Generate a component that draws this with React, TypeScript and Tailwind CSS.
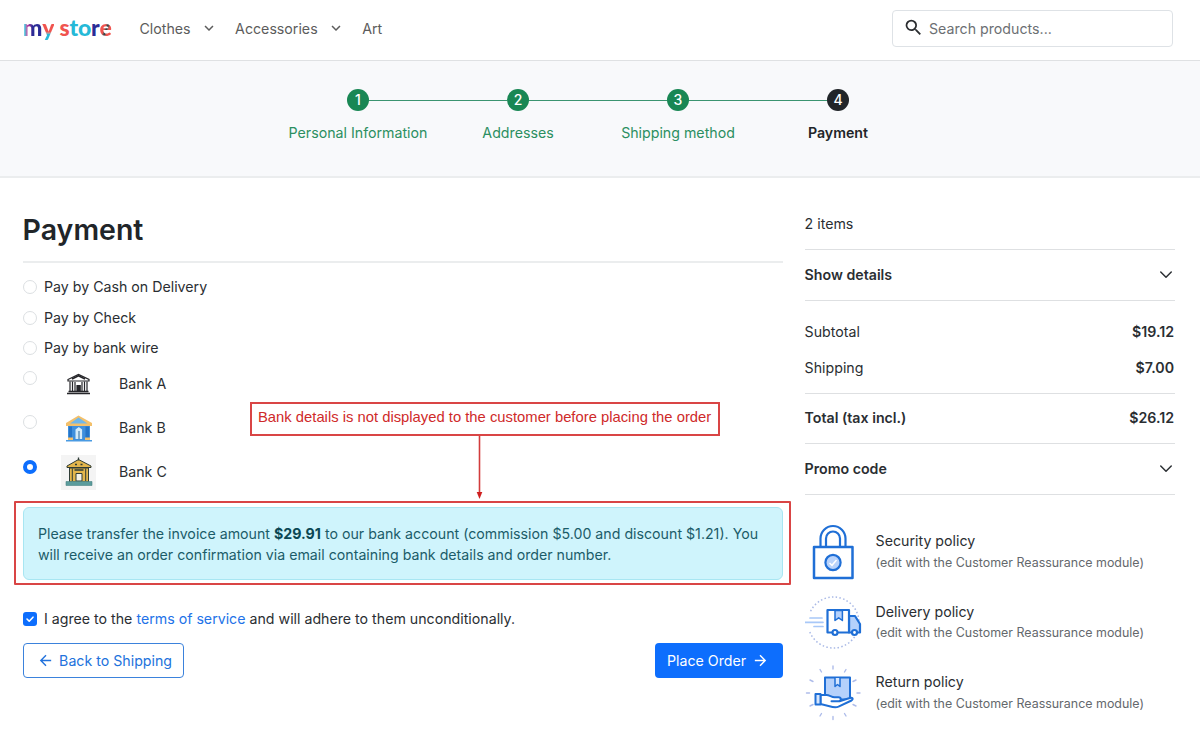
import React, { useState } from 'react';
import { MdArrowBack, MdArrowForward, MdExpandMore, MdSearch } from 'react-icons/md';

interface Step {
  label: string;
  current?: boolean;
}

const steps: Step[] = [
  { label: 'Personal Information' },
  { label: 'Addresses' },
  { label: 'Shipping method' },
  { label: 'Payment', current: true },
];

const methods = ['Pay by Cash on Delivery', 'Pay by Check', 'Pay by bank wire'];

const Logo: React.FC = () => (
  <div className="w-[89px] h-[30px] mb-[4px] flex items-center font-['Lato',sans-serif] font-black text-[23px] leading-[30px] tracking-[-0.2px] whitespace-pre">
    <span className="bg-linear-to-r from-[#24b9d7] from-10% via-[#c0289b] via-25% to-[#2b2b96] to-50% bg-clip-text text-transparent">m</span>
    <span className="bg-linear-to-b from-[#f0544f] from-65% to-[#25b9d7] to-75% bg-clip-text text-transparent">y</span>
    <span className="text-[#f0544f]"> s</span>
    <span className="text-[#25b9d7]">t</span>
    <span className="text-[#25b9d7]">o</span>
    <span className="text-[#2b2b96]">r</span>
    <span className="bg-linear-to-br from-[#f0544f] from-45% via-[#173b46] via-55% to-[#f0544f] to-65% bg-clip-text text-transparent">e</span>
  </div>
);

const Header: React.FC = () => (
  <header className="h-[61px] border-b border-[#dfe1e3] flex items-center justify-between pl-[23px] pr-[27px] pb-[3px]">
    <div className="flex items-center text-[#5c5c5c]">
      <Logo />
      <nav className="flex items-center ml-[27.5px]">
        <a className="flex items-center">
          Clothes <MdExpandMore size={18} className="ml-[9.5px] mb-[2px]" />
        </a>
        <a className="flex items-center ml-[17px]">
          Accessories <MdExpandMore size={18} className="ml-[9.5px] mb-[2px]" />
        </a>
        <a className="ml-[17px]">Art</a>
      </nav>
    </div>
    <div className="w-[281px] h-[37px] border border-[#dee2e6] rounded-[4px] flex items-center pl-[10px] text-[#6c6f73]">
      <MdSearch size={21} className="text-[#2b2d30] mr-[5px] mb-[2px]" />
      Search products...
    </div>
  </header>
);

const Steps: React.FC = () => (
  <section className="h-[117px] bg-[#f8f9fb] border-b-2 border-[#ebedee] flex justify-center pt-[28px] pr-[4px]">
    {steps.map((step, i) => (
      <div key={step.label} className="w-[160px] flex flex-col items-center">
        <div className="w-full flex items-center">
          <div className={i > 0 ? 'flex-1 h-px bg-[#3a9470]' : 'flex-1 h-px'} />
          <span
            className={`size-[22px] rounded-full text-white text-[14px] leading-[22px] text-center font-medium ${step.current ? 'bg-[#212529]' : 'bg-[#198754]'}`}
          >
            {i + 1}
          </span>
          <div className={step.current ? 'flex-1 h-px' : 'flex-1 h-px bg-[#3a9470]'} />
        </div>
        <span className={`mt-[11px] whitespace-nowrap ${step.current ? 'font-semibold text-[#212529]' : 'text-[#2b8f61]'}`}>
          {step.label}
        </span>
      </div>
    ))}
  </section>
);

const Radio: React.FC<{ checked?: boolean }> = ({ checked }) => (
  <span
    className={`block shrink-0 size-[14px] rounded-full bg-white ${checked ? 'border-[4px] border-[#0d6efd]' : 'border border-[#dcdfe2]'}`}
  />
);

const BankA: React.FC = () => (
  <svg width="35" height="35" viewBox="0 0 35 35" fill="none" stroke="#26262a" strokeWidth="1.2">
    <path d="M7 12.5 17.5 7.5 28 12.5V14H7Z" fill="#fff" />
    <path d="M11 12 17.5 8.8 24 12" strokeWidth="1.8" />
    <path d="M9 14.5V24M11.5 14.5V24M14 15V24M21 15V24M23.5 14.5V24M26 14.5V24" />
    <path d="M16 24V18.5h3.2V24" fill="#26262a" />
    <path d="M7.5 24.5h20M6 26.5h23" strokeWidth="1.3" />
  </svg>
);

const BankB: React.FC = () => (
  <svg width="35" height="35" viewBox="0 0 35 35">
    <path d="M7 14h22v15H7z" fill="#3f8fdc" />
    <path d="M5 12 17.5 4.5 31 12v3H5Z" fill="#f3c06b" />
    <path d="M9 12.5 17.5 6.5 26.5 12.5Z" fill="#70b7ea" />
    <path d="M8 15.5h3V28H8zM24.5 15.5h3.5V28h-3.5z" fill="#2474c8" />
    <path d="M14.5 28V18.5l3.3-2.5 3.3 2.5V28z" fill="#d4ebf9" />
    <path d="M17 20h2v8h-2z" fill="#7fa9c9" />
    <path d="M7 26.5h5V29H7zM24 26.5h5V29h-5z" fill="#f3c06b" />
    <path d="M5 29h26v1.5H5z" fill="#4a9be2" />
  </svg>
);

const BankC: React.FC = () => (
  <svg width="35" height="35" viewBox="0 0 35 35" className="bg-[#f4f4f4]" stroke="#2f3c36" strokeWidth="1">
    <path d="M8.5 13h19v14h-19z" fill="#e3b64c" />
    <path d="M6 12.5V11L17.5 4.5 30 11v1.5Z" fill="#e3b64c" />
    <path d="M17.5 2.5v3M14 9.5h2M19.5 9.5h2M13.5 15h9" strokeWidth="1.3" />
    <path d="M11.3 13.5V26M24.7 13.5V26" />
    <path d="M15 26v-7.5h6V26z" fill="#f5f3e9" />
    <path d="M5 26.5h26v4H5z" fill="#5b9c9c" stroke="#4b8585" strokeWidth=".6" />
  </svg>
);

const banks = [
  { name: 'Bank A', icon: <BankA /> },
  { name: 'Bank B', icon: <BankB /> },
  { name: 'Bank C', icon: <BankC /> },
];

const Chevron: React.FC = () => (
  <svg width="14" height="14" viewBox="0 0 16 16" fill="none" stroke="#2b2f33" strokeWidth="1.7" strokeLinecap="round" strokeLinejoin="round">
    <path d="m2 4.5 6 6 6-6" />
  </svg>
);

const LockIcon: React.FC = () => (
  <svg width="57" height="57" viewBox="0 0 57 57" fill="none" stroke="#1f6fd6" strokeWidth="2.2">
    <path d="M15.5 24V15.5a12.5 12.5 0 0 1 25 0V24M21 24v-8.5a7 7 0 0 1 14 0V24" />
    <path d="M9 24h38.5v31H9z" fill="#fff" strokeWidth="2.5" strokeLinejoin="round" />
    <circle cx="28" cy="39.5" r="7.6" fill="#b9d3fb" />
    <path d="m24.5 40 2.5 2.3 4.5-5.3" stroke="#fff" strokeWidth="1.5" />
  </svg>
);

const TruckIcon: React.FC = () => (
  <svg width="57" height="57" viewBox="0 0 57 57" fill="none" stroke="#1f6fd6" strokeWidth="2.2" strokeLinejoin="round">
    <circle cx="28.5" cy="28.5" r="25.5" stroke="#a9b9e6" strokeWidth="1.5" strokeDasharray="1.5 2.3" />
    <path d="M0 19h16v18H0z" fill="#fff" stroke="none" />
    <path d="M5 24h12M0 28.3h18M9 32.5h9" stroke="#a8c8f8" strokeWidth="1.7" strokeLinecap="round" />
    <path d="M44 22h6l5 8v8.5H44z" fill="#b5d1fb" />
    <path d="M22.5 16H44v22.5H22.5z" fill="#fff" />
    <path d="M30 16.5v10l3.7-2.7 3.7 2.7v-10z" fill="#b5d1fb" strokeWidth="1.5" />
    <circle cx="30" cy="38.5" r="2.5" fill="#fff" />
    <circle cx="49.5" cy="38.5" r="2.5" fill="#fff" />
  </svg>
);

const ReturnIcon: React.FC = () => (
  <svg width="57" height="57" viewBox="0 0 57 57" fill="none" stroke="#1f6fd6" strokeWidth="2" strokeLinejoin="round" strokeLinecap="round">
    <path
      d="M28 2v3M28 52.500v3M1.500 29h3M52 29h3M15 5.500l1.500 2.500M41 5.500 39.500 8M5 16l3 1.500M51 16l-3 1.500M5 42l3-1.500M51 42l-3-1.500M15 52l1.500-2.500M41 52 39.500 49.500"
      stroke="#aebcea"
      strokeWidth="1.4"
    />
    <path d="M20 13.500h25v22H20z" fill="#b5d1fb" />
    <path d="M30 14v8.500l2.500-2 2.500 2V14" strokeWidth="1.5" fill="#d6e6fd" />
    <path d="M15.500 31h6c3 0 5 2.200 8 2.200h4c3 0 3 4 0 4h-7 8l9.500-3c4-1.300 4.500 1 2.500 2.300l-13 6.200c-3 1.300-6 .5-9-.5l-9-2.200z" fill="#fff" />
    <path d="M10.500 30h5v10.500h-5z" fill="#d6e6fd" />
  </svg>
);

const policies = [
  { title: 'Security policy', icon: <LockIcon /> },
  { title: 'Delivery policy', icon: <TruckIcon /> },
  { title: 'Return policy', icon: <ReturnIcon /> },
];

const Payment: React.FC = () => {
  const [method, setMethod] = useState('Bank C');

  return (
    <div className="w-[760px] relative">
      <h1 className="text-[28.5px] leading-[36px] font-semibold text-[#212529] pb-[13px] border-b-2 border-[#ebedee]">Payment</h1>

      <div className="pt-[9px]">
        {methods.map((name) => (
          <label key={name} onClick={() => setMethod(name)} className="h-[30.5px] flex items-center gap-[7.4px]">
            <Radio checked={method === name} />
            {name}
          </label>
        ))}
      </div>

      <div className="-mt-[2px]">
        {banks.map((bank) => (
          <label key={bank.name} onClick={() => setMethod(bank.name)} className="h-[44.4px] flex items-center">
            <span className="self-start pt-[9.5px]">
              <Radio checked={method === bank.name} />
            </span>
            <span className="ml-[24px] mr-[23.4px] pt-[1px]">{bank.icon}</span>
            {bank.name}
          </label>
        ))}
      </div>

      <div className="mt-[12.7px] h-[73px] rounded-[6px] border border-[#a8e6f2] bg-[#cff4fc] text-[#1b5c69] px-[14.3px] pt-[16px] leading-[20.5px]">
        Please transfer the invoice amount <b className="font-bold text-[#0a4754]">$29.91</b> to our bank account (commission $5.00 and discount $1.21). You
        will receive an order confirmation via email containing bank details and order number.
      </div>

      <label className="mt-[28.5px] h-[20px] flex items-center">
        <span className="size-[14px] rounded-[3px] bg-[#0d6efd] mr-[7.4px] flex items-center justify-center">
          <svg width="10" height="10" viewBox="0 0 10 10" fill="none" stroke="#fff" strokeWidth="1.6" strokeLinecap="round" strokeLinejoin="round">
            <path d="m2 5 2.2 2.2L8 3.2" />
          </svg>
        </span>
        <span>
          I agree to the <a className="text-[#2272e8]">terms of service</a> and will adhere to them unconditionally.
        </span>
      </label>

      <div className="mt-[14.5px] flex justify-between">
        <button className="w-[161px] h-[35px] rounded-[4px] border border-[#3b82dc] text-[#2272dc] flex items-center pl-[13px] gap-[6.5px] whitespace-nowrap">
          <MdArrowBack size={17} className="-mr-px mb-px" />
          Back to Shipping
        </button>
        <button className="w-[128px] h-[35px] rounded-[4px] bg-[#0d6efd] text-white flex items-center pl-[12.4px] gap-[6px] whitespace-nowrap">
          Place Order
          <MdArrowForward size={17} className="mb-px" />
        </button>
      </div>

      {/* Annotations laid over the form */}
      <div className="absolute left-[227px] top-[190px] w-[470px] h-[34px] border-2 border-[#d94545] text-[#cf2a2a] font-['Liberation_Sans',sans-serif] text-[14.8px] leading-[27px] text-center whitespace-nowrap">
        Bank details is not displayed to the customer before placing the order
      </div>
      <svg className="absolute left-[452px] top-[224px]" width="9" height="63" viewBox="0 0 9 63">
        <path d="M4.5 0v57" stroke="#d23c3c" strokeWidth="1.6" />
        <path d="M1.7 56h5.6L4.5 63z" fill="#cf1f1f" />
      </svg>
      <div className="absolute left-[-9px] top-[289px] w-[777px] h-[84px] border-2 border-[#d94545] rounded-[1px]" />
    </div>
  );
};

const Summary: React.FC = () => (
  <aside className="w-[370px]">
    <div className="h-[37.5px] border-b border-[#dee0e2] leading-[24px]">2 items</div>
    <div className="h-[51px] border-b border-[#dee0e2] flex items-center justify-between font-semibold pr-[1.5px]">
      Show details <Chevron />
    </div>
    <div className="h-[93px] border-b border-[#dee0e2] pt-[13px]">
      <div className="h-[36px] flex items-center justify-between pr-[0.6px]">
        Subtotal <span className="font-semibold">$19.12</span>
      </div>
      <div className="h-[36px] flex items-center justify-between pr-[0.6px]">
        Shipping <span className="font-semibold">$7.00</span>
      </div>
    </div>
    <div className="h-[50px] border-b border-[#dee0e2] flex items-center justify-between font-semibold pr-[0.6px]">
      Total (tax incl.) <span>$26.12</span>
    </div>
    <div className="h-[51px] border-b border-[#dee0e2] flex items-center justify-between font-semibold pr-[1.5px]">
      Promo code <Chevron />
    </div>

    <div className="mt-[28.5px] flex flex-col gap-[13.5px]">
      {policies.map((policy) => (
        <div key={policy.title} className="h-[57px] flex">
          {policy.icon}
          <div className="ml-[14px] pt-[7px]">
            <div className="leading-[21.5px]">{policy.title}</div>
            <div className="text-[12.45px] leading-[21px] text-[#64686c]">(edit with the Customer Reassurance module)</div>
          </div>
        </div>
      ))}
    </div>
  </aside>
);

const App: React.FC = () => (
  <div className="w-[1200px] h-[738px] overflow-hidden bg-white font-['Inter',sans-serif] text-[14.2px] leading-[22px] text-[#2a2e32]">
    <Header />
    <Steps />
    <main className="flex pl-[22.6px] pt-[34px] gap-[22px]">
      <Payment />
      <Summary />
    </main>
  </div>
);

export default App;
